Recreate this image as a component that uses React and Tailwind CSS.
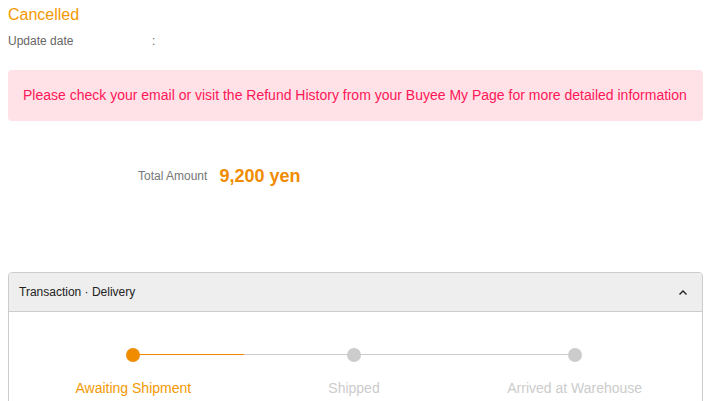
export default function App() {
  const steps = [
    { label: "Awaiting Shipment", active: true },
    { label: "Shipped", active: false },
    { label: "Arrived at Warehouse", active: false },
  ];
  return (
    <div className="w-[708px] h-[401px] overflow-hidden bg-white font-['Liberation_Sans',Arial,sans-serif]">
      <div className="pl-2 pr-[5px]">
        <div className="pt-[5px] text-[16px] leading-[20px] text-[#f39800]">Cancelled</div>
        <div className="mt-[8px] flex text-[12px] leading-[16px] text-[#666]">
          <span className="w-[144px]">Update date</span>
          <span>:</span>
        </div>
        <div className="mt-[21px] h-[51px] rounded-[4px] bg-[#ffe2e7] px-[15px] flex items-center whitespace-nowrap text-[14px] text-[#ff1658]">
          Please check your email or visit the Refund History from your Buyee My Page for more detailed information
        </div>
        <div className="mt-[44px] flex items-center h-[22px] pl-[130px]">
          <span className="text-[12px] text-[#777] mr-[12px]">Total Amount</span>
          <span className="text-[18px] font-bold text-[#f08c00]">9,200 yen</span>
        </div>
        <div className="mt-[85px] rounded-t-[4px] border border-[#cccccc]">
          <div className="h-[39px] bg-[#eeeeee] border-b border-[#cccccc] flex items-center justify-between pl-[10px] pr-[14px] rounded-t-[4px]">
            <span className="text-[12px] text-[#222]">Transaction · Delivery</span>
            <svg width="10" height="7" viewBox="0 0 10 7" fill="none">
              <path d="M1.5 5.5 L5 2 L8.5 5.5" stroke="#222" strokeWidth="1.4" />
            </svg>
          </div>
          <div className="pl-[14px] pr-[17px] pt-[36px] pb-[20px] grid grid-cols-3">
            {steps.map((s, i) => (
              <div key={i} className="flex flex-col items-center">
                <div className="relative w-full h-[14px] flex justify-center">
                  {i < steps.length - 1 && (
                    <div className="absolute left-1/2 top-[6px] w-full h-px bg-[#cccccc]">
                      {s.active && <div className="h-px w-1/2 bg-[#f08c00]" />}
                    </div>
                  )}
                  <div
                    className={
                      "relative w-[14px] h-[14px] rounded-full " +
                      (s.active ? "bg-[#f08c00]" : "bg-[#cccccc]")
                    }
                  />
                </div>
                <div
                  className={
                    "mt-[18px] text-[14px] leading-[16px] " +
                    (s.active ? "text-[#f39800]" : "text-[#cccccc]")
                  }
                >
                  {s.label}
                </div>
              </div>
            ))}
          </div>
        </div>
      </div>
    </div>
  );
}
